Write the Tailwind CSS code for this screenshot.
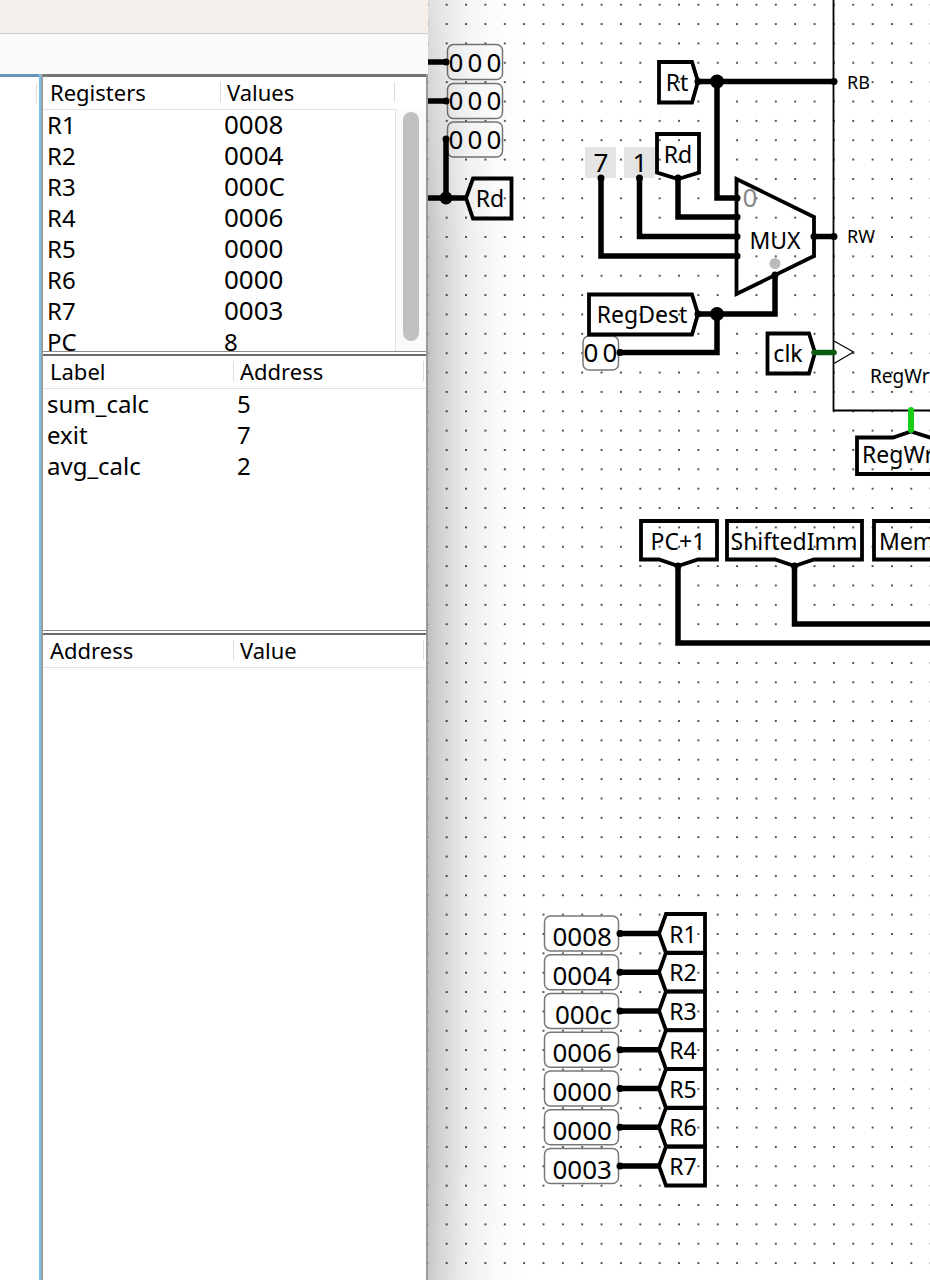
<!DOCTYPE html>
<html lang="en">
<head>
<meta charset="utf-8">
<title>Registers and circuit</title>
<script src="https://cdn.jsdelivr.net/npm/@tailwindcss/browser@4"></script>
</head>
<body class="flex h-screen overflow-hidden bg-white font-['Noto_Sans',sans-serif] text-black">

<aside class="flex h-full w-[428px] shrink-0 flex-col">
  <div class="h-[34px] shrink-0 border-b border-[#cfcfcf] bg-[#f4efeb]"></div>
  <div class="h-10 shrink-0 bg-[#fafaf9]"></div>
  <div class="flex min-h-0 grow">
    <div class="flex w-[39px] shrink-0 justify-end border-t-3 border-[#6a93b8]">
      <div class="mt-[6px] mr-[2px] h-5 w-px bg-[#dcdcdc]"></div>
    </div>
    <div class="w-[2px] shrink-0 bg-[#7cc0e8]"></div>
    <div class="flex min-w-0 grow flex-col border-r-2 border-l-2 border-[#979c9c]">

      <section class="flex h-[278px] shrink-0 overflow-hidden border-t-3 border-b border-t-[#757575] border-b-[#8c8c8c]">
        <table class="w-full table-fixed self-start border-collapse text-left">
          <thead class="text-[22px] leading-[30px]">
            <tr class="border-b border-[#e2e2e2]">
              <th class="w-[177px] pb-[2px] pl-[7px] font-normal">Registers</th>
              <th class="pb-[2px] font-normal"><div class="flex h-5 items-center border-r border-l border-[#dcdcdc] pl-[6px]">Values</div></th>
            </tr>
          </thead>
          <tbody class="[&_td]:pb-[2px] [&_td]:pl-1 [&_td]:leading-[29px]">
            <tr><td class="text-[24px]">R1</td><td class="text-[26px]">0008</td></tr>
            <tr><td class="text-[24px]">R2</td><td class="text-[26px]">0004</td></tr>
            <tr><td class="text-[24px]">R3</td><td class="text-[26px]">000C</td></tr>
            <tr><td class="text-[24px]">R4</td><td class="text-[26px]">0006</td></tr>
            <tr><td class="text-[24px]">R5</td><td class="text-[26px]">0000</td></tr>
            <tr><td class="text-[24px]">R6</td><td class="text-[26px]">0000</td></tr>
            <tr><td class="text-[24px]">R7</td><td class="text-[26px]">0003</td></tr>
            <tr><td class="text-[24px]">PC</td><td class="text-[24px]">8</td></tr>
          </tbody>
        </table>
        <div class="mt-8 flex w-[31px] shrink-0 justify-center border-l border-[#e2e2e2] bg-[#fafafa] pt-[3px] pb-[10px]">
          <div class="w-4 rounded-full bg-[#c1c1c1]"></div>
        </div>
      </section>

      <section class="mt-[2px] h-[277px] shrink-0 overflow-hidden border-t-2 border-b border-t-[#6b6b6b] border-b-[#8c8c8c]">
        <table class="w-full table-fixed border-collapse text-left">
          <thead class="text-[22px] leading-[30px]">
            <tr class="border-b border-[#e2e2e2]">
              <th class="w-[190px] pb-[2px] pl-[7px] font-normal">Label</th>
              <th class="pr-[2px] pb-[2px] font-normal"><div class="flex h-5 items-center border-r border-l border-[#dcdcdc] pl-[6px]">Address</div></th>
            </tr>
          </thead>
          <tbody class="text-[24px] [&_td]:pb-[2px] [&_td]:pl-1 [&_td]:leading-[29px]">
            <tr><td>sum_calc</td><td>5</td></tr>
            <tr><td>exit</td><td>7</td></tr>
            <tr><td>avg_calc</td><td>2</td></tr>
          </tbody>
        </table>
      </section>

      <section class="mt-[2px] grow border-t-2 border-t-[#6b6b6b]">
        <table class="w-full table-fixed border-collapse text-left">
          <thead class="text-[22px] leading-[30px]">
            <tr class="border-b border-[#e2e2e2]">
              <th class="w-[190px] pb-[2px] pl-[7px] font-normal">Address</th>
              <th class="pr-[2px] pb-[2px] font-normal"><div class="flex h-5 items-center border-r border-l border-[#dcdcdc] pl-[6px]">Value</div></th>
            </tr>
          </thead>
        </table>
      </section>
    </div>
  </div>
</aside>

<main class="h-full min-w-0 grow overflow-hidden">
<svg class="block h-[1280px] w-[502px]" viewBox="428 0 502 1280" role="img" aria-label="Circuit canvas">
  <defs>
    <pattern id="grid" x="437" y="-5" width="19.36" height="19.36" patternUnits="userSpaceOnUse">
      <rect x="8.800" y="8.800" width="1.800" height="1.800" fill="#333"/>
    </pattern>
    <linearGradient id="shade">
      <stop offset="0" stop-color="#000" stop-opacity=".24"/>
      <stop offset=".12" stop-color="#000" stop-opacity=".18"/>
      <stop offset=".4" stop-color="#000" stop-opacity=".07"/>
      <stop offset=".7" stop-color="#000" stop-opacity=".02"/>
      <stop offset="1" stop-color="#000" stop-opacity="0"/>
    </linearGradient>
    <linearGradient id="fade" x2="0" y2="1">
      <stop offset="0" stop-color="#888"/>
      <stop offset=".2" stop-color="#fff"/>
      <stop offset=".9" stop-color="#fff"/>
      <stop offset="1" stop-color="#ddd"/>
    </linearGradient>
    <mask id="falloff" maskUnits="userSpaceOnUse" x="428" y="0" width="100" height="1280">
      <rect x="428" width="100" height="1280" fill="url(#fade)"/>
    </mask>
    <g id="regrow">
      <rect x="544.5" y="916" width="74" height="35" rx="6" fill="#fff" stroke="#777" stroke-width="1.5"/>
      <path d="M620 933.500H660" stroke="#000" stroke-width="5.500"/>
      <circle cx="620" cy="933.500" r="3.500"/>
      <path d="M666 914H705V953H666L659 933.500Z" fill="none" stroke="#000" stroke-width="3.800"/>
    </g>
  </defs>
  <rect x="428" width="502" height="1280" fill="url(#grid)"/>

  <!-- output pins beside the window -->
  <g fill="#fff" stroke="#777" stroke-width="1.5">
    <rect x="447.500" y="44.500" width="55" height="35" rx="6"/>
    <rect x="447.500" y="83.500" width="55" height="35" rx="6"/>
    <rect x="447.500" y="122" width="55" height="35" rx="6"/>
    <rect x="583" y="336" width="35.500" height="34" rx="6"/>
  </g>
  <g fill="#e4e4e4"><rect x="585" y="147" width="31" height="31"/><rect x="624" y="147" width="31" height="31"/></g>

  <!-- wires -->
  <g fill="none" stroke="#000" stroke-width="5.500">
    <path d="M428 62H446M428 101H446M428 198H466M446 198V139"/>
    <path d="M698 81.500H834M717 81.500V198H738"/>
    <path d="M678 178V217H738M639.500 178V236.500H738M601 178V256H738M814 236.500H834"/>
    <path d="M698 314H775V275M717 314V352.500H620"/>
    <path d="M678 566V643H930M794.500 566V624H930"/>
  </g>
  <circle cx="446" cy="198" r="6.500"/><circle cx="717" cy="81.500" r="7"/><circle cx="717" cy="314" r="7"/>
  <g>
    <circle cx="446" cy="62" r="3.500"/><circle cx="446" cy="101" r="3.500"/><circle cx="446" cy="139" r="3.500"/>
    <circle cx="698" cy="81.500" r="3.500"/><circle cx="834" cy="81.500" r="3.500"/><circle cx="834" cy="236.500" r="3.500"/>
    <circle cx="814" cy="236.500" r="3.500"/><circle cx="737" cy="198" r="3.500"/><circle cx="737" cy="217" r="3.500"/>
    <circle cx="737" cy="236.500" r="3.500"/><circle cx="737" cy="256" r="3.500"/><circle cx="775" cy="275" r="3.500"/>
    <circle cx="601" cy="178" r="3.500"/><circle cx="639.500" cy="178" r="3.500"/><circle cx="678" cy="178" r="3.500"/>
    <circle cx="698" cy="314" r="3.500"/><circle cx="620" cy="352.500" r="3.500"/>
    <circle cx="678" cy="566" r="3.500"/><circle cx="794.500" cy="566" r="3.500"/>
  </g>

  <!-- tunnels, multiplexer -->
  <g fill="none" stroke="#000" stroke-width="3.800">
    <path d="M473 178.500H511.500V218.500H473L466 198Z"/>
    <path d="M659 62H692L698 81.500L692 102.500H659Z"/>
    <path d="M657 134H699V172.500L678 179L657 172.500Z"/>
    <path d="M589 294.500H692L698 314L692 334.500H589Z"/>
    <path d="M767.500 333.500H809L815 352.500L809 373.500H767.500Z"/>
    <path d="M641 521H717V559.500H698L678 566L659 559.500H641Z"/>
    <path d="M727 521H862V559.500H814L794.500 566L775 559.500H727Z"/>
    <path d="M940 521H874V559.500H940"/>
    <path d="M940 474H857V437.500H893L911 431.500L930 437.500H940"/>
    <path d="M736.500 179L814 217V256L736.500 294Z"/>
  </g>
  <circle cx="775" cy="263.500" r="5.500" fill="#bbb"/>

  <!-- register file -->
  <path d="M833.500 0V410.500H930" fill="none" stroke="#000" stroke-width="1.800"/>
  <path d="M834 341L853.500 352L834 363.500" fill="none" stroke="#000" stroke-width="1.200"/>
  <path d="M814 352.500H834" stroke="#0b5c0f" stroke-width="5.500" stroke-linecap="round"/>
  <path d="M911 410V430" stroke="#18cc18" stroke-width="6" stroke-linecap="round"/>

  <g>
    <use href="#regrow"/><use href="#regrow" y="38.700"/><use href="#regrow" y="77.400"/><use href="#regrow" y="116.200"/>
    <use href="#regrow" y="155"/><use href="#regrow" y="193.700"/><use href="#regrow" y="232.500"/>
  </g>

  <g class="text-[26px]" text-anchor="middle">
    <text x="456" y="72">0</text><text x="475" y="72">0</text><text x="494" y="72">0</text>
    <text x="456" y="110">0</text><text x="475" y="110">0</text><text x="494" y="110">0</text>
    <text x="456" y="149">0</text><text x="475" y="149">0</text><text x="494" y="149">0</text>
    <text x="591" y="362">0</text><text x="610" y="362">0</text>
    <text x="601" y="172">7</text><text x="640" y="172">1</text>
    <text x="750" y="207" fill="#888">0</text>
  </g>
  <g class="text-[26px]" text-anchor="end">
    <text x="612" y="946">0008</text><text x="612" y="985">0004</text><text x="612" y="1024">000c</text>
    <text x="612" y="1062">0006</text><text x="612" y="1101">0000</text><text x="612" y="1140">0000</text><text x="612" y="1179">0003</text>
  </g>
  <g class="text-[23px]" text-anchor="middle">
    <text x="490" y="207">Rd</text><text x="677" y="91">Rt</text><text x="678" y="163">Rd</text>
    <text x="642" y="323">RegDest</text><text x="788" y="362">clk</text><text x="775" y="249">MUX</text>
    <text x="678" y="550">PC+1</text><text x="794" y="550">ShiftedImm</text>
    <text x="683" y="943">R1</text><text x="683" y="981">R2</text><text x="683" y="1020">R3</text><text x="683" y="1059">R4</text>
    <text x="683" y="1098">R5</text><text x="683" y="1136">R6</text><text x="683" y="1175">R7</text>
  </g>
  <g class="text-[23px]"><text x="862" y="463">RegWr</text><text x="879" y="550">Mem</text></g>
  <g class="text-[18px]"><text x="847" y="89">RB</text><text x="847" y="243">RW</text><text x="870" y="383" class="text-[19px]">RegWr</text></g>

  <!-- shadow cast by the window -->
  <rect x="428" width="100" height="1280" fill="url(#shade)" mask="url(#falloff)"/>
</svg>
</main>
</body>
</html>
